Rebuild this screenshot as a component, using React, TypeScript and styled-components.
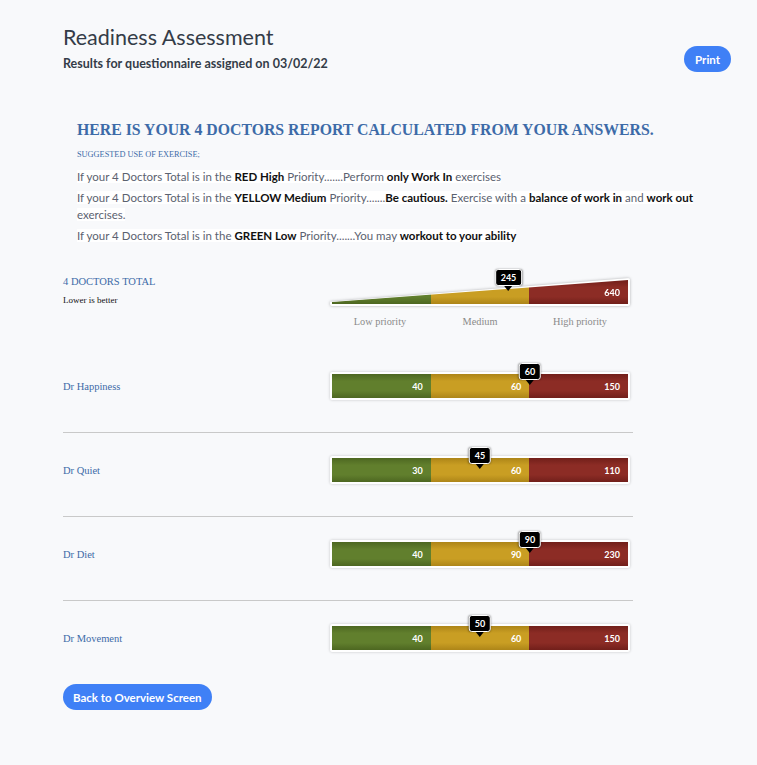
import React from "react";
import styled, { createGlobalStyle } from "styled-components";

const GlobalStyle = createGlobalStyle`
  body {
    margin: 0;
    background: #f8f9fb;
    font-family: Lato, "Open Sans", sans-serif;
  }
`;

const Page = styled.div`
  padding: 24px 26px 56px 63px;
  color: #343c48;
`;

const Header = styled.header`
  display: flex;
  justify-content: space-between;
  align-items: flex-start;
`;

const Title = styled.h1`
  margin: 0;
  font-size: 21.5px;
  font-weight: 400;
  line-height: 26px;
  color: #343c48;
`;

const Subtitle = styled.p`
  margin: 6px 0 0;
  font-size: 12.5px;
  font-weight: 700;
  color: #343c48;
`;

const PillButton = styled.button`
  border: none;
  border-radius: 14px;
  background: #3f80f6;
  color: #fff;
  font-family: inherit;
  font-size: 11.5px;
  font-weight: 700;
  height: 26px;
  padding: 0 11px;
  cursor: pointer;
`;

const PrintButton = styled(PillButton)`
  margin-top: 22px;
`;

const Report = styled.section`
  width: 625px;
  padding-left: 14px;
  margin-top: 49px;
`;

const ReportHeading = styled.h2`
  margin: 0;
  font-family: "Liberation Serif", serif;
  font-weight: 700;
  font-size: 15.8px;
  color: #3d6ba8;
`;

const SmallCaps = styled.div`
  margin-top: 11px;
  font-family: "Liberation Serif", serif;
  font-size: 8.3px;
  color: #3d6ba8;
`;

const Rule = styled.p`
  margin: 4px 0 0;
  font-size: 11.5px;
  line-height: 17px;
  color: #5b6270;
  span {
    background: #fff;
  }
  b {
    color: #111;
  }
`;

const FirstRule = styled(Rule)`
  margin-top: 9px;
`;

const Gauges = styled.div`
  width: 570px;
  margin-top: 32px;
`;

const Row = styled.div<{ $last?: boolean }>`
  display: grid;
  grid-template-columns: 267px 300px;
  align-items: center;
  padding: 23px 0 32px;
  border-bottom: ${(p) => (p.$last ? "none" : "1px solid #c9c9c9")};
`;

const TotalRow = styled.div`
  display: grid;
  grid-template-columns: 267px 300px;
  align-items: start;
  padding-bottom: 22px;
`;

const Label = styled.div`
  font-family: "Liberation Serif", serif;
  font-size: 10.5px;
  color: #3d6ba8;
`;

const Note = styled.div`
  margin-top: 8px;
  font-family: "Liberation Serif", serif;
  font-size: 9px;
  color: #111;
`;

const TotalGauge = styled.div`
  margin-top: 2px;
`;

const BarWrap = styled.div`
  position: relative;
`;

const BarFrame = styled.div<{ $taper?: boolean }>`
  padding: 2px;
  background: #fff;
  border-radius: 2px;
  box-shadow: ${(p) => (p.$taper ? "none" : "0 0 3px rgba(0, 0, 0, 0.22)")};
  clip-path: ${(p) =>
    p.$taper ? "polygon(0 85%, 100% 0, 100% 100%, 0 100%)" : "none"};
`;

const TaperShadow = styled.div`
  filter: drop-shadow(0 0 1.5px rgba(0, 0, 0, 0.3));
`;

const Bar = styled.div<{ $taper?: boolean }>`
  display: grid;
  grid-template-columns: 1fr 1fr 1fr;
  height: 24px;
  clip-path: ${(p) =>
    p.$taper ? "polygon(0 92%, 100% 0, 100% 100%, 0 100%)" : "none"};
`;

const shades: Record<string, [string, string]> = {
  green: ["#617f2d", "#4d6721"],
  yellow: ["#c99e23", "#ad8518"],
  red: ["#8c2c25", "#711f1a"],
};

const Segment = styled.div<{ $tone: string }>`
  display: flex;
  align-items: center;
  justify-content: flex-end;
  padding-right: 8px;
  font-size: 9px;
  font-weight: 700;
  color: #fff;
  background: linear-gradient(
    ${(p) => shades[p.$tone][1]} 0%,
    ${(p) => shades[p.$tone][0]} 30%,
    ${(p) => shades[p.$tone][0]} 70%,
    ${(p) => shades[p.$tone][1]} 100%
  );
`;

const Tip = styled.div`
  position: absolute;
  top: -9px;
  transform: translateX(-50%);
  background: #000;
  color: #fff;
  font-size: 9px;
  font-weight: 700;
  line-height: 13px;
  padding: 1px 5px;
  border: 1.5px solid #fff;
  border-radius: 3px;
  box-shadow: 0 0 2px rgba(0, 0, 0, 0.4);
  &::after {
    content: "";
    position: absolute;
    left: 50%;
    bottom: -6px;
    margin-left: -4px;
    border-left: 4px solid transparent;
    border-right: 4px solid transparent;
    border-top: 5px solid #000;
  }
`;

const Scale = styled.div`
  display: grid;
  grid-template-columns: 1fr 1fr 1fr;
  margin-top: 10px;
  font-family: "Liberation Serif", serif;
  font-size: 10.3px;
  color: #8a8a8a;
  text-align: center;
`;

const BackButton = styled(PillButton)`
  margin-top: 0;
  padding: 0 10px;
`;

type Doctor = { name: string; marks: [number, number, number]; value: number };

const doctors: Doctor[] = [
  { name: "Dr Happiness", marks: [40, 60, 150], value: 60 },
  { name: "Dr Quiet", marks: [30, 60, 110], value: 45 },
  { name: "Dr Diet", marks: [40, 90, 230], value: 90 },
  { name: "Dr Movement", marks: [40, 60, 150], value: 50 },
];

// where a value sits on the bar: each band takes a third of the width
const position = (marks: number[], value: number) => {
  let start = 0;
  for (let i = 0; i < marks.length; i++) {
    if (value <= marks[i]) {
      return ((i + (value - start) / (marks[i] - start)) / marks.length) * 100;
    }
    start = marks[i];
  }
  return 100;
};

const App = () => (
  <>
    <GlobalStyle />
    <Page>
      <Header>
        <div>
          <Title>Readiness Assessment</Title>
          <Subtitle>Results for questionnaire assigned on 03/02/22</Subtitle>
        </div>
        <PrintButton>Print</PrintButton>
      </Header>

      <Report>
        <ReportHeading>HERE IS YOUR 4 DOCTORS REPORT CALCULATED FROM YOUR ANSWERS.</ReportHeading>
        <SmallCaps>SUGGESTED USE OF EXERCISE;</SmallCaps>
        <FirstRule>
          <span>
            If your 4 Doctors Total is in the <b>RED High</b> Priority.......Perform <b>only Work In</b> exercises
          </span>
        </FirstRule>
        <Rule>
          <span>
            If your 4 Doctors Total is in the <b>YELLOW Medium</b> Priority.......<b>Be cautious.</b> Exercise with a{" "}
            <b>balance of work in</b> and <b>work out</b> exercises.
          </span>
        </Rule>
        <Rule>
          <span>
            If your 4 Doctors Total is in the <b>GREEN Low</b> Priority.......You may <b>workout to your ability</b>
          </span>
        </Rule>
      </Report>

      <Gauges>
        <TotalRow>
          <div>
            <Label>4 DOCTORS TOTAL</Label>
            <Note>Lower is better</Note>
          </div>
          <TotalGauge>
            <BarWrap>
              <TaperShadow>
                <BarFrame $taper>
                  <Bar $taper>
                    <Segment $tone="green" />
                    <Segment $tone="yellow" />
                    <Segment $tone="red">640</Segment>
                  </Bar>
                </BarFrame>
              </TaperShadow>
              <Tip style={{ left: "59.5%" }}>245</Tip>
            </BarWrap>
            <Scale>
              <span>Low priority</span>
              <span>Medium</span>
              <span>High priority</span>
            </Scale>
          </TotalGauge>
        </TotalRow>

        {doctors.map((d, i) => (
          <Row key={d.name} $last={i === doctors.length - 1}>
            <Label>{d.name}</Label>
            <BarWrap>
              <BarFrame>
                <Bar>
                  <Segment $tone="green">{d.marks[0]}</Segment>
                  <Segment $tone="yellow">{d.marks[1]}</Segment>
                  <Segment $tone="red">{d.marks[2]}</Segment>
                </Bar>
              </BarFrame>
              <Tip style={{ left: `${position(d.marks, d.value)}%` }}>{d.value}</Tip>
            </BarWrap>
          </Row>
        ))}
      </Gauges>

      <BackButton>Back to Overview Screen</BackButton>
    </Page>
  </>
);

export default App;
